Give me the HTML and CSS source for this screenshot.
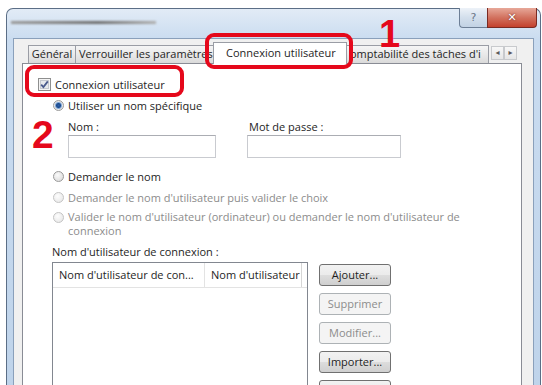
FILE: index.html
```html
<!DOCTYPE html>
<html lang="fr">
<head>
  <meta charset="UTF-8" />
  <title>Connexion utilisateur</title>
  <link rel="stylesheet" href="styles.css">
</head>
<body>
  <div class="window">
    <div class="titlebar">
      <div class="title-blur"></div>
      <div class="caption-btns">
        <span class="cap help">?</span>
        <span class="cap close">✕</span>
      </div>
    </div>
    <div class="client">
      <div class="tabs">
        <div class="tab tab-general">Général</div>
        <div class="tab tab-lock">Verrouiller les paramètres :</div>
        <div class="tab active">Connexion utilisateur</div>
        <div class="tab tab-count">omptabilité des tâches d'i</div>
        <div class="tab-arrows">
          <span class="arrow">&#9666;</span><span class="arrow">&#9656;</span>
        </div>
      </div>
      <div class="panel">
        <label class="check-row">
          <svg class="checkbox" width="13" height="13" viewBox="0 0 13 13">
            <rect x="0.5" y="0.5" width="12" height="12" fill="#f4f4f4" stroke="#8e8f8f"/>
            <rect x="2.5" y="2.5" width="8" height="8" fill="#e6e8ec" stroke="#c5c8cf"/>
            <path d="M3.2 6.6 L5.4 9 L9.8 3.4" fill="none" stroke="#4a5a8c" stroke-width="1.8"/>
          </svg>
          Connexion utilisateur
        </label>

        <div class="radio-row first">
          <span class="radio checked"></span>Utiliser un nom spécifique
        </div>

        <div class="fields">
          <div class="field">
            <div class="field-label">Nom :</div>
            <div class="textbox name-box"></div>
          </div>
          <div class="field">
            <div class="field-label">Mot de passe :</div>
            <div class="textbox pass-box"></div>
          </div>
        </div>

        <div class="radio-row ask">
          <span class="radio"></span>Demander le nom
        </div>
        <div class="radio-row disabled">
          <span class="radio"></span>Demander le nom d'utilisateur puis valider le choix
        </div>
        <div class="radio-row disabled wrap">
          <span class="radio"></span>
          <span>Valider le nom d'utilisateur (ordinateur) ou demander le nom d'utilisateur de<br>connexion</span>
        </div>

        <div class="list-title">Nom d'utilisateur de connexion :</div>
        <div class="list-area">
          <div class="listbox">
            <div class="list-head">
              <div class="col col-1">Nom d'utilisateur de con...</div>
              <div class="col col-2">Nom d'utilisateur (</div>
            </div>
          </div>
          <div class="buttons">
            <div class="btn">Ajouter...</div>
            <div class="btn" data-off>Supprimer</div>
            <div class="btn" data-off>Modifier...</div>
            <div class="btn">Importer...</div>
            <div class="btn">Exporter...</div>
          </div>
        </div>
      </div>
    </div>
  </div>

  <!-- repères rouges -->
  <div class="mark-box mark-tab"></div>
  <div class="mark-box mark-check"></div>
  <div class="mark-num num-1">1</div>
  <div class="mark-num num-2">2</div>
</body>
</html>
```

FILE: styles.css
```css
body {
  margin: 0;
  height: 385px;
  overflow: hidden;
  background: #fff;
  font-family: "Open Sans", "Noto Sans", sans-serif;
  font-size: 11px;
  color: #1e1e1e;
}
.window {
  margin: 8px 1px 0 6px;
  height: 400px;
  padding: 0 6px;
  border: 1px solid #5b6e86;
  border-bottom: none;
  border-radius: 7px 7px 0 0;
  background: linear-gradient(#e2ebf6, #cadcf0 30px, #bed3ea);
}
.titlebar {
  height: 29px;
  display: flex;
  justify-content: space-between;
  align-items: flex-start;
}
.title-blur {
  width: 145px;
  height: 3px;
  margin: 12px 0 0 -2px;
  background: linear-gradient(90deg, #9a9a9a, #6e6e6e 60%, #b0b0b0);
  filter: blur(1.2px);
}
.caption-btns {
  display: flex;
  margin: -1px -3px 0 0;
}
.cap {
  height: 19px;
  display: flex;
  align-items: center;
  justify-content: center;
  border: 1px solid #6d7f96;
  border-top: none;
  font-family: "DejaVu Sans", sans-serif;
}
.help {
  width: 27px;
  border-radius: 0 0 0 4px;
  border-right: none;
  background: linear-gradient(#edf2f8, #d3dfec 50%, #c2d2e4);
  color: #6a7687;
  font-size: 11px;
}
.close {
  width: 48px;
  border-radius: 0 0 4px 0;
  border-color: #7a2a22;
  background: linear-gradient(#e7a899, #d2725f 50%, #c4412d);
  color: #fff;
  font-size: 11px;
  font-weight: bold;
  text-shadow: 0 0 2px #5a1c14;
}
.client {
  height: 360px;
  padding: 3px 11px 0 8px;
  border: 1px solid #8aa0bb;
  background: #f0f0f0;
}
.tabs {
  height: 21px;
  display: flex;
  align-items: flex-end;
  padding-left: 6px;
}
.tab {
  height: 18px;
  box-sizing: border-box;
  border: 1px solid #9a9da5;
  border-bottom: none;
  background: linear-gradient(#f5f5f5, #e9e9e9 50%, #dadada);
  line-height: 16px;
  white-space: nowrap;
  overflow: hidden;
}
.tab + .tab {
  margin-left: -1px;
}
.tab-general {
  width: 48px;
  text-align: center;
}
.tab-lock {
  width: 139px;
  padding-left: 3px;
}
.tab.active {
  position: relative;
  z-index: 1;
  width: 134px;
  height: 22px;
  margin-bottom: -1px;
  background: #fff;
  line-height: 20px;
  padding-left: 12px;
}
.tab-count {
  width: 143px;
  padding-left: 3px;
}
.tab-arrows {
  display: flex;
  margin: 0 0 3px 2px;
}
.arrow {
  width: 13px;
  height: 14px;
  box-sizing: border-box;
  border: 1px solid #c8cacd;
  background: linear-gradient(#f8f8f8, #e6e6e6);
  color: #5a5a5a;
  font-size: 8px;
  line-height: 12px;
  text-align: center;
  font-family: "DejaVu Sans", sans-serif;
}
.panel {
  height: 330px;
  padding-left: 15px;
  border: 1px solid #898c95;
  background: #fff;
}
.check-row {
  display: flex;
  align-items: center;
  gap: 4px;
  height: 16px;
  margin-top: 12px;
}
.radio-row {
  display: flex;
  align-items: center;
  gap: 4px;
  height: 16px;
  margin-left: 15px;
  white-space: nowrap;
}
.radio-row.first {
  margin-top: 5px;
}
.radio {
  width: 11px;
  height: 11px;
  flex: none;
  box-sizing: border-box;
  border-radius: 50%;
  border: 1px solid #9a9a9a;
  background: radial-gradient(circle at 40% 35%, #fafafa, #d6d6d6);
}
.radio.checked {
  background: radial-gradient(circle, #2a5fa8 0, #1d4a8c 2px, #7fa6d6 3px, #e8e8e8 4px);
}
.disabled {
  color: #8c8c8c;
}
.disabled .radio {
  border-color: #c4c4c4;
  background: radial-gradient(circle at 40% 35%, #fdfdfd, #e4e4e4);
}
.radio-row.ask {
  margin-top: 10px;
}
.radio-row.disabled {
  margin-top: 5px;
}
.radio-row.wrap {
  height: auto;
  align-items: flex-start;
  line-height: 14px;
}
.radio-row.wrap .radio {
  margin-top: 2px;
}
.fields {
  display: flex;
  gap: 31px;
  margin: 6px 0 0 30px;
}
.field-label {
  height: 16px;
  line-height: 16px;
}
.field + .field .field-label {
  padding-left: 2px;
}
.textbox {
  height: 23px;
  box-sizing: border-box;
  border: 1px solid #c9cbd0;
  border-top-color: #abadb3;
  background: #fff;
}
.name-box {
  width: 148px;
}
.pass-box {
  width: 154px;
}
.list-title {
  margin: 6px 0 0 14px;
  height: 16px;
  line-height: 16px;
}
.list-area {
  display: flex;
  margin: 2px 0 0 14px;
}
.listbox {
  width: 256px;
  height: 140px;
  box-sizing: border-box;
  border: 1px solid #828790;
  background: #fff;
}
.list-head {
  display: flex;
  height: 24px;
  border-bottom: 1px solid #e3e3e3;
  line-height: 24px;
  white-space: nowrap;
}
.col {
  overflow: hidden;
}
.col-1 {
  width: 152px;
  flex: none;
  padding-left: 6px;
  box-sizing: border-box;
  border-right: 1px solid #e3e3e3;
}
.col-2 {
  width: 97px;
  flex: none;
  box-sizing: border-box;
  padding-left: 6px;
  border-right: 1px solid #d6d6d6;
}
.buttons {
  display: flex;
  flex-direction: column;
  gap: 7px;
  margin: 2px 0 0 11px;
}
.btn {
  width: 72px;
  height: 22px;
  box-sizing: border-box;
  border: 1px solid #707070;
  border-radius: 3px;
  background: linear-gradient(#f2f2f2, #ebebeb 50%, #dddddd 51%, #cfcfcf);
  text-align: center;
  line-height: 20px;
}
.btn[data-off] {
  border-color: #adb2b5;
  background: #f4f4f4;
  color: #8c8c8c;
}
.mark-box {
  position: absolute;
  box-sizing: border-box;
  border: 4px solid #e5081b;
  border-radius: 9px;
  z-index: 5;
}
.mark-tab {
  left: 205px;
  top: 33px;
  width: 148px;
  height: 36px;
}
.mark-check {
  left: 25px;
  top: 65px;
  width: 159px;
  height: 32px;
  box-shadow: 0 2px 0 1px #fff;
}
.mark-num {
  position: absolute;
  z-index: 5;
  font-family: "Liberation Sans", Arial, sans-serif;
  font-weight: bold;
  color: #e5081b;
  line-height: 1;
}
.num-1 {
  left: 379px;
  top: 15px;
  font-size: 38px;
}
.num-2 {
  left: 32px;
  top: 115px;
  font-size: 39px;
}
```
